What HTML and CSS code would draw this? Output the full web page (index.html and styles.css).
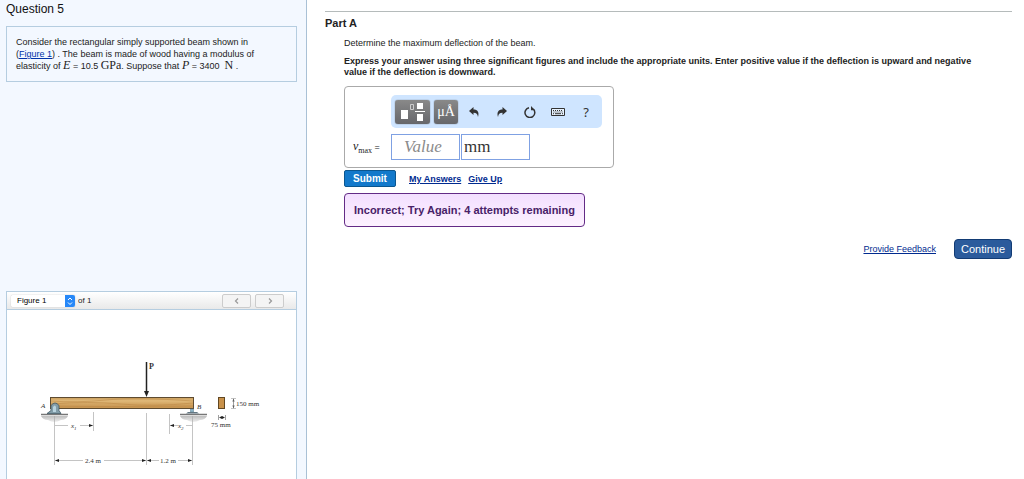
FILE: index.html
```html
<!DOCTYPE html>
<html lang="en">
<head>
<meta charset="utf-8">
<title>Question 5</title>
<link rel="stylesheet" href="styles.css">
</head>
<body>
<div class="page">
  <aside class="side">
    <h1 class="title">Question 5</h1>
    <p class="problem">Consider the rectangular simply supported beam shown in<br>(<a href="#figure">Figure 1</a>) . The beam is made of wood having a modulus of<br>elasticity of <i class="math">E</i> = 10.5 <span class="math">GPa</span>. Suppose that <i class="math">P</i> = 3400 &nbsp;<span class="math">N</span> .</p>
    <section class="figure" id="figure">
      <div class="figure-bar">
        <div class="picker">
          <select class="picker-select" id="fig" aria-label="Figure"><option>Figure 1</option></select>
          <svg class="picker-icon" viewBox="0 0 10 12"><path d="M3 5l2-2 2 2M3 7.500l2 2 2-2" fill="none" stroke="#fff"/></svg>
        </div>
        <label for="fig">of 1</label>
        <button class="nav nav-first" aria-label="Previous"><svg viewBox="0 0 8 8"><path d="M5 1.500L2.500 4 5 6.500"/></svg></button>
        <button class="nav" aria-label="Next"><svg viewBox="0 0 8 8"><path d="M3 1.500L5.500 4 3 6.500"/></svg></button>
      </div>
      <svg class="beam" viewBox="0 0 289 169" role="img" aria-label="Simply supported beam">
        <defs>
          <linearGradient id="wood" x1="0" y1="0" x2="0" y2="1"><stop offset="0" stop-color="#c99d5c"/><stop offset=".3" stop-color="#e0b979"/><stop offset=".6" stop-color="#d2a461"/><stop offset="1" stop-color="#c6924d"/></linearGradient>
          <linearGradient id="ground" x1="0" y1="0" x2="0" y2="1"><stop offset="0" stop-color="#bdbdbd"/><stop offset="1" stop-color="#eee"/></linearGradient>
        </defs>
        <path d="M34 106h27q-2 4-7 4-7 4-13 0-5 0-7-4zM173 106h27q-2 4-7 4-7 4-13 0-5 0-7-4z" fill="url(#ground)"/>
        <rect x="43.500" y="87.500" width="143" height="11" fill="url(#wood)" stroke="#5e4b30"/>
        <path d="M44 91q25 2 55-1t87 1M44 94q38-3 70 0t72-1M44 96q50 1 142 0" fill="none" stroke="#b98543" stroke-width=".5"/>
        <path d="M34 104.500h27M173 104.500h27" stroke="#777" stroke-width="1.500"/>
        <path d="M40 103.500h14l-2-3v-5q-4-5-8 0v5z" fill="#829da9" stroke="#435b66" stroke-width=".8"/>
        <path d="M46 102v-5q2-3 3 0v5" fill="#b9d4df"/>
        <path d="M183.500 99h3v3h-3z" fill="#8eb6ca" stroke="#56798a" stroke-width=".5"/>
        <path d="M179 103.500h13l-2-1.500h-9z" fill="#637681"/>
        <path d="M139.500 52v31" stroke="#222" stroke-width="1.500"/>
        <path d="M137 81h5l-2.500 6z" fill="#222"/>
        <path d="M47.500 106v49M86.500 102v19M139.500 103v52M162.500 104v20M185.500 106v49M48 115.500h13M73 115.500h13M163 115.500h8M179 115.500h6M48 150.500h28M97 150.500h42M140 150.500h12M171 150.500h14M224 88.500h5M224 98.500h5" stroke="#aaa" stroke-width=".7" fill="none"/>
        <path d="M86 115.500l-4-1.500v3zM163 115.500l4-1.500v3zM48 150.500l4-1.500v3zM139 150.500l-4-1.500v3zM140 150.500l4-1.500v3zM185 150.500l-4-1.500v3zM226.500 88.500l-1 3h2zM226.500 98.500l-1-3h2zM212 107.500l3-1.500v3zM218 107.500l-3-1.500v3z" fill="#222"/>
        <path d="M226.500 90v8M211.500 105v5M218.500 105v5" stroke="#777" stroke-width=".7"/>
        <rect x="211.500" y="87.500" width="6" height="11" fill="#c8914a" stroke="#614722"/>
        <g class="beam-text">
          <text class="force" x="142" y="59">P</text>
          <text x="34" y="98" font-style="italic">A</text>
          <text x="190" y="99" font-style="italic">B</text>
          <text x="64" y="118" font-style="italic">x<tspan class="sub" dy="2">1</tspan></text>
          <text x="171" y="118" font-style="italic">x<tspan class="sub" dy="2">2</tspan></text>
          <text x="78" y="153">2.4 m</text>
          <text x="153" y="153">1.2 m</text>
          <text x="229" y="96">150 mm</text>
          <text x="204" y="117">75 mm</text>
        </g>
      </svg>
    </section>
  </aside>
  <main class="main">
    <h2 class="part">Part A</h2>
    <div class="content">
      <p class="line">Determine the maximum deflection of the beam.</p>
      <p class="line bold">Express your answer using three significant figures and include the appropriate units. Enter positive value if the deflection is upward and negative<br>value if the deflection is downward.</p>
      <form class="answer" onsubmit="return false">
        <div class="tools">
          <button class="tool dark wide" aria-label="Templates"><svg width="34" height="24" viewBox="0 0 34 24"><path d="M5 10h7v9H5zM21 3h6v6h-6zM21 14h6v7h-6z" fill="#fff"/><path d="M19 11.500h10" stroke="#fff"/><path d="M14.500 4.500h3v5h-3z" fill="none" stroke="#ccc"/></svg></button>
          <button class="tool dark">μÅ</button>
          <button class="tool plain" aria-label="Undo"><svg viewBox="0 0 12 12"><path d="M1 5l4.500-4v2.500C9.500 3.500 11.500 6 10 11 9.500 8 8.500 6.800 5.500 6.800V9z" fill="#333"/></svg></button>
          <button class="tool plain" aria-label="Redo"><svg viewBox="0 0 12 12"><path d="M11 5L6.500 1v2.500C2.500 3.500 .5 6 2 11 2.500 8 3.500 6.800 6.500 6.800V9z" fill="#333"/></svg></button>
          <button class="tool plain" aria-label="Reset"><svg viewBox="0 0 12 12"><path d="M9.200 3A4.900 4.900 0 1 1 5 1.800" fill="none" stroke="#333" stroke-width="1.500"/><path d="M7 0v4.200h4z" fill="#333"/></svg></button>
          <button class="tool plain" aria-label="Keyboard"><svg class="keys" viewBox="0 0 14 10"><path d="M.5 1.500h13v7H.5z" fill="#e8f3ff" stroke="#333"/><path d="M2 3.500h10M2.500 5h9" stroke="#333" stroke-dasharray="1 1"/><path d="M2 6.700h1M4 6.700h6M11 6.700h1" stroke="#333"/></svg></button>
          <button class="tool plain help">?</button>
        </div>
        <label class="var" for="value"><i>v</i><sub>max</sub> =</label>
        <div class="fields">
          <input class="field value" id="value" placeholder="Value">
          <input class="field" value="mm" aria-label="Units">
        </div>
      </form>
      <div class="actions">
        <button class="submit">Submit</button>
        <a href="#answers">My Answers</a>
        <a href="#giveup">Give Up</a>
      </div>
      <div class="result" role="status">Incorrect; Try Again; 4 attempts remaining</div>
    </div>
    <footer class="footer">
      <a href="#feedback">Provide Feedback</a>
      <button class="continue">Continue</button>
    </footer>
  </main>
</div>
</body>
</html>
```
FILE: styles.css
```css
* { box-sizing: border-box; }
body {
  margin: 0;
  font: 9px/12px "Liberation Sans", Arial, sans-serif;
  color: #222;
  background: #fff;
}
a { color: #03a; }
p, h1, h2 { margin: 0; }
button, input, select { font: inherit; margin: 0; }
.page { display: flex; min-height: 100vh; }
.side {
  flex: 0 0 307px;
  display: flex;
  flex-direction: column;
  padding: 0 9px 0 6px;
  background: #f3f8ff;
  border-right: 1px solid #a9c1d6;
}
.title { font-size: 12px; line-height: 18px; font-weight: normal; color: #111; }
.problem {
  margin-top: 8px;
  padding: 9px;
  min-height: 55px;
  border: 1px solid #b5cde0;
}
.math { font-family: "Liberation Serif", serif; font-size: 12px; line-height: 10px; }
.figure { margin-top: auto; border: 1px solid #b5cde0; border-bottom: 0; background: #fff; }
.figure-bar {
  display: flex;
  align-items: center;
  height: 18px;
  padding: 0 12px 0 4px;
  font-size: 8px;
  background: linear-gradient(#fff, #e9e9e9);
  border-bottom: 1px solid #b5cde0;
}
.picker { display: flex; width: 64px; height: 12px; margin-right: 3px; background: #fff; border-radius: 2px; box-shadow: 0 0 1px #999; overflow: hidden; }
.picker-select { flex: 1; min-width: 0; padding: 0 0 0 6px; border: 0; appearance: none; background: #fff; color: #000; }
.picker-icon { width: 10px; height: 12px; background: #2788f8; }
.nav { width: 29px; height: 14px; padding: 0; border: 1px solid #ccc; border-radius: 2px; background: #f4f4f4; display: flex; align-items: center; justify-content: center; margin-left: 4px; }
.nav-first { margin-left: auto; }
.nav svg { width: 8px; height: 8px; fill: none; stroke: #999; stroke-width: 1.2; }
.beam { display: block; width: 100%; }
.beam-text { font-family: "Liberation Serif", serif; font-size: 7px; fill: #333; }
.force { font-size: 8px; font-weight: bold; }
.sub { font-size: 5px; }
.main { flex: 1; min-width: 0; padding: 11px 12px 0 18px; }
.part { padding-top: 4px; border-top: 1px solid #b5bbbb; font-size: 11px; line-height: 14px; }
.content { padding: 0 10px 0 19px; }
.line { margin-top: 7px; }
.bold { font-weight: bold; line-height: 11px; }
.answer {
  display: grid;
  grid-template-columns: 46px 211px;
  row-gap: 6px;
  align-items: center;
  width: 270px;
  margin-top: 8px;
  padding: 8px 0 7px;
  border: 1px solid #aaa;
  border-radius: 4px;
}
.tools { grid-column: 2; display: flex; align-items: center; gap: 4px; height: 33px; padding: 0 4px; background: #cfe5ff; border-radius: 5px; }
.tool { display: flex; align-items: center; justify-content: center; height: 24px; padding: 0; border: 0; background: none; }
.dark { width: 24px; border-radius: 3px; background: linear-gradient(#898989, #66676b); box-shadow: 0 0 1px #333; color: #fff; font: 14px/20px "Liberation Serif", serif; }
.wide { width: 35px; }
.plain { width: 24px; color: #333; }
.plain svg { width: 12px; height: 12px; }
.plain .keys { width: 14px; height: 10px; }
.help { font: 13px/20px "Noto Sans", sans-serif; }
.var { padding-left: 8px; white-space: nowrap; }
.var i { font: italic 12px/14px "Liberation Serif", serif; }
.var sub { font: 8px/8px "Liberation Serif", serif; }
.fields { display: flex; gap: 1px; }
.field { width: 69px; height: 26px; padding: 0 2px; border: 1px solid #7fa1e3; border-radius: 0; background: #fff; color: #333; font: 17px/22px "Liberation Serif", serif; }
.value { padding-left: 12px; font-style: italic; }
.field::placeholder { color: #8b8b8b; opacity: 1; }
.actions { display: flex; align-items: center; margin-top: 2px; gap: 7px; font-weight: bold; }
.actions a, .footer a { color: #002a8f; }
.submit { width: 52px; height: 17px; margin-right: 6px; padding: 0; border: 1px solid #0b568f; border-radius: 2px; background: #1379cb; color: #fff; font-size: 10px; }
.result {
  width: fit-content;
  margin-top: 6px;
  padding: 9px;
  border: 1px solid #632b86;
  border-radius: 4px;
  background: linear-gradient(#f3dfff, #fdf2ff);
  color: #482268;
  font-size: 11px;
  line-height: 14px;
  font-weight: bold;
}
.footer { display: flex; justify-content: flex-end; align-items: center; gap: 18px; margin-top: 12px; }
.continue { width: 58px; height: 20px; padding: 0; border: 1px solid #123b74; border-radius: 4px; background: #2b5b9c; color: #fff; font-size: 11px; }
```
